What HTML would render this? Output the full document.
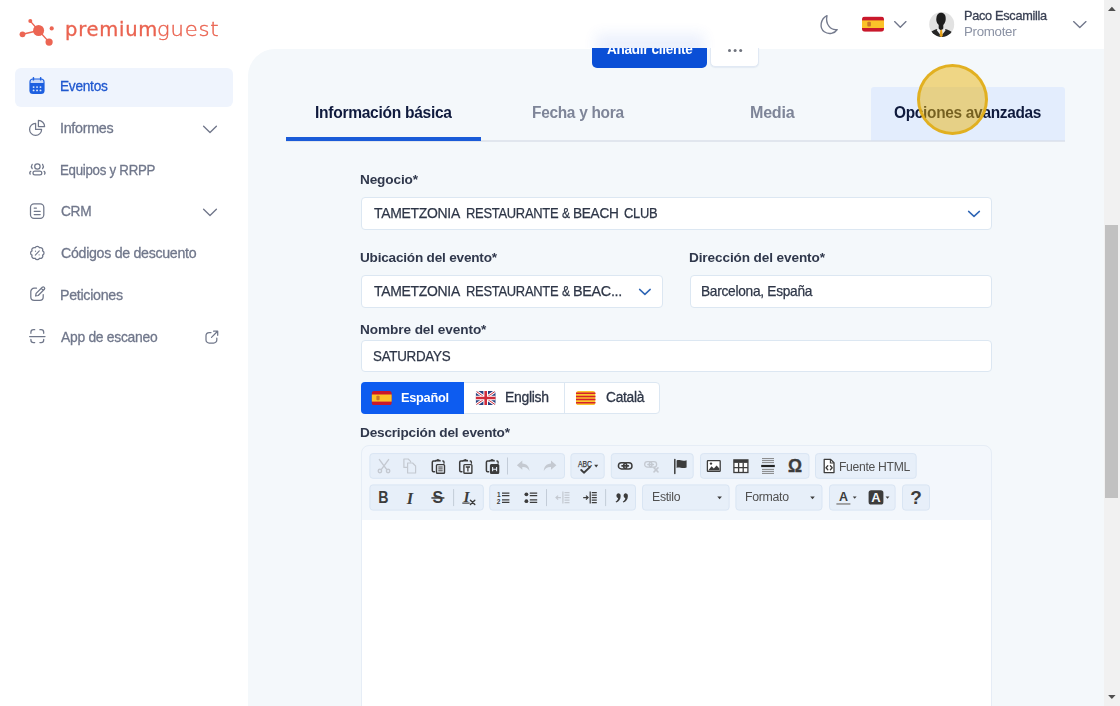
<!DOCTYPE html>
<html lang="es"><head><meta charset="utf-8"><title>PremiumGuest</title>
<style>
*{box-sizing:border-box;margin:0;padding:0}
html,body{width:1120px;height:706px;overflow:hidden;background:#fff;font-family:"Liberation Sans",sans-serif;color:#1b2a4a}
#app{position:relative;width:1120px;height:706px;overflow:hidden}
.a{position:absolute}
.t{position:absolute;white-space:nowrap;line-height:20px;transform-origin:0 50%}
svg{position:absolute;overflow:visible}
#panel{left:248px;top:48.6px;width:856px;height:700px;background:#f4f8fb;border-top-left-radius:27px}
#sb{left:1104px;top:0;width:16px;height:706px;background:#f1f1f1}
#sb .th{position:absolute;left:1.2px;width:12.8px;top:225px;height:273px;background:#c1c1c1}
.inp{position:absolute;background:#fff;border:1px solid #dce7f2;border-radius:4px}
.tg{position:absolute;background:#e8f0fa;border:1px solid #dbe6f3;border-radius:3px;height:26px}

</style></head><body><div id="app">
<div id="panel" class="a"></div>
<!-- action buttons (partly hidden by header) -->
<div class="a" style="left:592px;top:30px;width:115px;height:37.6px;background:#0a4fd6;border-radius:5px"></div>
<span class="t" style="left:607.00px;top:39.00px;font-size:14px;font-weight:bold;color:#ffffff;letter-spacing:-0.300px;transform:scaleX(0.9674);">Añadir cliente</span>
<div class="a" style="left:709.8px;top:30px;width:48.8px;height:37px;background:#fff;border:1px solid #e1e9f4;border-radius:5px;box-shadow:0 1px 1px rgba(180,195,220,.25)"></div>
<div class="a" style="left:727.5px;top:49.1px;width:3.4px;height:3.4px;border-radius:50%;background:#6f737d;box-shadow:5.6px 0 0 #6f737d,11.2px 0 0 #6f737d"></div>
<!-- header -->
<div class="a" style="left:0;top:0;width:1104px;height:48.2px;background:#fff"></div>
<div class="a" style="left:596px;top:34px;width:108px;height:22px;background:#2a5fe0;opacity:.09;filter:blur(7px);clip-path:inset(-20px -20px 7.800px -20px)"></div>
<!-- sidebar -->
<div class="a" style="left:15px;top:68px;width:218px;height:39px;border-radius:6px;background:#eff4fd"></div>
<!-- tabs -->
<div class="a" style="left:286px;top:140px;width:779px;height:1.5px;background:#e1e6ee"></div>
<div class="a" style="left:871px;top:87px;width:194px;height:54px;background:#e3edfd;border-radius:3px 3px 0 0;border-bottom:1.5px solid #dbe3f0"></div>
<div class="a" style="left:286px;top:137px;width:195px;height:4px;background:#1a5bd8"></div>
<!-- form -->
<div class="inp" style="left:361px;top:197px;width:631px;height:33px"></div>
<div class="inp" style="left:361px;top:275px;width:302px;height:33px"></div>
<div class="inp" style="left:689.5px;top:275px;width:302.5px;height:33px"></div>
<div class="inp" style="left:361px;top:340px;width:631px;height:32px"></div>
<!-- language switch -->
<div class="inp" style="left:361px;top:381.6px;width:299.300px;height:32.400px"></div>
<div class="a" style="left:361px;top:381.6px;width:103px;height:32.400px;background:#0d5cf0;border-radius:4px 0 0 4px"></div>
<div class="a" style="left:563.5px;top:382px;width:1px;height:31.500px;background:#dce7f2"></div>
<!-- editor -->
<div class="a" style="left:361px;top:444.5px;width:631px;height:300px;background:#f3f7fc;border:1px solid #e6edf6;border-radius:8px"></div>
<div class="a" style="left:362px;top:519.5px;width:629px;height:200px;background:#fff"></div>

<!-- logo icon -->
<svg width="1120" height="706" viewBox="0 0 1120 706" style="left:0;top:0;pointer-events:none">
<g fill="#ec6553" stroke="#ec6553" stroke-width="1.4" stroke-linecap="round">
<path d="M38.600,30.500 L30.300,21.100 M38.600,30.500 L22.500,34.300 M38.600,30.500 L49.100,42.100" fill="none"/>
<circle cx="38.600" cy="30.500" r="5.500" stroke="none"/><circle cx="30.300" cy="21.100" r="2" stroke="none"/><circle cx="22.500" cy="34.300" r="2.900" stroke="none"/><circle cx="49.100" cy="42.100" r="3.600" stroke="none"/><circle cx="51.700" cy="28.400" r="2.100" stroke="none"/>
</g>
<!-- calendar -->
<g>
<rect x="29.4" y="78.4" width="15.2" height="15.7" rx="3.6" fill="#1d5fe0"/>
<path d="M30.6,83 V81.6 a2.2,2.2 0 0 1 2.2,-2.2 h8.4 a2.2,2.2 0 0 1 2.2,2.2 V83 Z" fill="#c9d9f8"/>
<rect x="32.7" y="77" width="1.5" height="3.6" rx=".7" fill="#1d5fe0"/><rect x="39.9" y="77" width="1.5" height="3.6" rx=".7" fill="#1d5fe0"/>
<g fill="#dfe9fc"><circle cx="33.6" cy="87.1" r=".95"/><circle cx="37.05" cy="87.1" r=".95"/><circle cx="40.5" cy="87.1" r=".95"/><circle cx="33.6" cy="90.4" r=".95"/><circle cx="37.05" cy="90.4" r=".95"/><circle cx="40.5" cy="90.4" r=".95"/></g>
</g>
<g fill="none" stroke="#70778a" stroke-width="1.25" stroke-linecap="round" stroke-linejoin="round">
<!-- pie -->
<path d="M35.6,123.4 A6,6 0 1 0 41.6,129.4 L35.6,129.4 Z"/>
<path d="M38.4,120.4 A6.2,6.2 0 0 1 44.6,126.6 L38.4,126.6 Z"/>
<!-- people -->
<circle cx="37.4" cy="166.5" r="2.7"/>
<rect x="33" y="171" width="8.8" height="3.8" rx="1.9"/>
<path d="M32.2,164.3 q-1.6,2.2 0,4.4 M42.6,164.3 q1.6,2.2 0,4.4 M30.8,171.3 q-1.7,1.2 -.6,2.9 M44,171.3 q1.7,1.2 .6,2.9"/>
<!-- crm -->
<rect x="30.5" y="203.9" width="13.3" height="14.4" rx="3.5"/>
<path d="M34.2,208.1 h2.2 M34.2,211.3 h6 M34.2,214.5 h6"/>
<!-- discount -->
<path d="M39.48,247.73A2.36,2.36 0 0 1 42.57,250.82A2.36,2.36 0 0 1 42.57,255.18A2.36,2.36 0 0 1 39.48,258.27A2.36,2.36 0 0 1 35.12,258.27A2.36,2.36 0 0 1 32.03,255.18A2.36,2.36 0 0 1 32.03,250.82A2.36,2.36 0 0 1 35.12,247.73A2.36,2.36 0 0 1 39.48,247.73Z"/>
<path d="M39.3,250.9 l-4,4.200" stroke-width="1.1"/>
<circle cx="35.500" cy="251.200" r=".6" fill="#70778a" stroke="none"/><circle cx="39.100" cy="254.800" r=".6" fill="#70778a" stroke="none"/>
<!-- edit -->
<path d="M36.5,288.2 H34.2 a3.4,3.4 0 0 0 -3.4,3.4 v5.4 a3.4,3.4 0 0 0 3.4,3.4 h5.6 a3.4,3.4 0 0 0 3.4,-3.4 V294.6"/>
<path d="M35.6,296 l.5,-2.6 6.2,-6.2 a1.5,1.5 0 0 1 2.1,2.1 l-6.2,6.2 z M41.2,288.3 l2.1,2.1"/>
<!-- scan -->
<path d="M30.9,333.3 v-1 a2.6,2.6 0 0 1 2.6,-2.6 h1.2 M39.9,329.7 h1.2 a2.6,2.6 0 0 1 2.6,2.6 v1 M43.7,339.3 v.6 a2.6,2.6 0 0 1 -2.6,2.6 h-1.2 M34.7,342.5 h-1.2 a2.6,2.6 0 0 1 -2.6,-2.6 v-.6 M29.6,336.6 H45"/>
<!-- external -->
<path d="M211,332.5 H209.2 a3.2,3.2 0 0 0 -3.2,3.2 v4.2 a3.2,3.2 0 0 0 3.2,3.2 h4.4 a3.2,3.2 0 0 0 3.2,-3.2 V338"/>
<path d="M211.5,337.4 L217.6,331.3 M213.6,331.2 h4.1 v4.1"/>
</g>
<!-- chevrons -->
<g fill="none" stroke="#70768a" stroke-width="1.35" stroke-linecap="round" stroke-linejoin="round">
<path d="M203.6,126.3 l6.4,6.2 6.4,-6.2"/>
<path d="M203.6,209.3 l6.4,6.2 6.4,-6.2"/>
<path d="M894.6,21.6 l5.7,5.6 5.7,-5.6"/>
<path d="M1073.6,21.6 l6.2,6 6.2,-6"/>
<path d="M968.6,211.400 l5.400,5 5.400,-5" stroke="#2f66b5" stroke-width="1.5"/>
<path d="M639.600,289.400 l5.300,5 5.300,-5" stroke="#2f66b5" stroke-width="1.5"/>
</g>
<!-- moon -->
<path d="M827,15.600 C820.500,18.800 819,28 824.300,31.800 C828.600,34.800 834.800,33.600 837.200,29.600 C830.500,30.600 825.200,24.200 827,15.600 Z" fill="none" stroke="#747a8d" stroke-width="1.350" stroke-linejoin="round"/>
<!-- ES flag header -->
<g>
<clipPath id="fc1"><rect x="862" y="16.6" width="22" height="15.2" rx="3"/></clipPath>
<g clip-path="url(#fc1)"><rect x="862" y="16.6" width="22" height="15.2" fill="#c9182b"/><rect x="862" y="20.4" width="22" height="7.6" fill="#fbc229"/><rect x="867.3" y="21.7" width="3.6" height="4.8" rx="1" fill="#c9772a"/></g>
</g>
<!-- avatar -->
<g>
<clipPath id="av"><circle cx="941.7" cy="24.4" r="12.5"/></clipPath>
<circle cx="941.7" cy="24.4" r="12.5" fill="#e2e2e2"/>
<g clip-path="url(#av)">
<path d="M929,38 c0,-5.500 2.500,-7.300 8.300,-9 l3.900,1 3.900,-1 c5.800,1.700 8.800,3.500 8.800,9z" fill="#262626"/>
<path d="M937.600,28.600 l3.600,1.400 3.600,-1.400 .8,1.600 -4.400,5.800 -4.400,-5.800z" fill="#ededed"/>
<path d="M938.700,22 h4.600 v6.600 l-2.300,1.800 -2.300,-1.800z" fill="#1d1d1d"/>
<path d="M936.300,19.500 c0,-4.500 1.800,-6.800 4.700,-6.800 c3.200,0 4.900,2.300 4.700,6.600 c-.2,3.600 -2,6.200 -4.700,6.200 c-2.700,0 -4.700,-2.600 -4.700,-6z" fill="#1d1d1d"/>
<path d="M940.300,30.200 l.9,-.7 .9,.7 .6,5.300 -1.500,2.300 -1.500,-2.300z" fill="#e6a21a"/>
</g>
</g>
<!-- language flags -->
<g>
<clipPath id="fl1"><rect x="371.6" y="391" width="20.2" height="14.1" rx="2.6"/></clipPath>
<g clip-path="url(#fl1)"><rect x="371.6" y="391" width="20.2" height="14.1" fill="#c9182b"/><rect x="371.6" y="394.5" width="20.2" height="7.1" fill="#fbc229"/><rect x="376.4" y="395.7" width="3.2" height="4.5" rx=".9" fill="#c9772a"/></g>
<clipPath id="fl2"><rect x="475.7" y="391" width="20" height="14" rx="2.6"/></clipPath>
<g clip-path="url(#fl2)"><rect x="475.7" y="391" width="20" height="14" fill="#27407f"/>
<path d="M475.7,391 L495.7,405 M495.7,391 L475.7,405" stroke="#fff" stroke-width="3"/>
<path d="M475.7,391 L495.7,405 M495.7,391 L475.700,405" stroke="#cf2b3a" stroke-width="1"/>
<path d="M485.7,391 V405 M475.7,398 H495.7" stroke="#fff" stroke-width="4.6"/>
<path d="M485.7,391 V405 M475.7,398 H495.7" stroke="#cf2b3a" stroke-width="2.6"/></g>
<clipPath id="fl3"><rect x="575.9" y="391" width="19.6" height="14" rx="2.6"/></clipPath>
<g clip-path="url(#fl3)"><rect x="575.9" y="391" width="19.6" height="14" fill="#fbc62c"/>
<path d="M575.9,393.33 h20 M575.9,396.44 h20 M575.9,399.56 h20 M575.9,402.67 h20" stroke="#d5202c" stroke-width="1.56"/></g>
</g>
</svg>
<svg width="1120" height="706" viewBox="0 0 1120 706" style="left:0;top:0;pointer-events:none">
<rect x="369.90" y="453.60" width="194.60" height="24.70" rx="3" fill="#e7eff9" stroke="#d9e5f3" stroke-width="1"/>
<rect x="570.90" y="453.60" width="33.30" height="24.70" rx="3" fill="#e7eff9" stroke="#d9e5f3" stroke-width="1"/>
<rect x="611.30" y="453.60" width="81.90" height="24.70" rx="3" fill="#e7eff9" stroke="#d9e5f3" stroke-width="1"/>
<rect x="700.50" y="453.60" width="108.50" height="24.70" rx="3" fill="#e7eff9" stroke="#d9e5f3" stroke-width="1"/>
<rect x="815.50" y="453.60" width="100.70" height="24.70" rx="3" fill="#e7eff9" stroke="#d9e5f3" stroke-width="1"/>
<rect x="369.90" y="484.90" width="113.40" height="25.20" rx="3" fill="#e7eff9" stroke="#d9e5f3" stroke-width="1"/>
<rect x="489.70" y="484.90" width="145.80" height="25.20" rx="3" fill="#e7eff9" stroke="#d9e5f3" stroke-width="1"/>
<rect x="642.50" y="484.90" width="86.60" height="25.20" rx="3" fill="#e7eff9" stroke="#d9e5f3" stroke-width="1"/>
<rect x="735.90" y="484.90" width="86.10" height="25.20" rx="3" fill="#e7eff9" stroke="#d9e5f3" stroke-width="1"/>
<rect x="829.50" y="484.90" width="65.60" height="25.20" rx="3" fill="#e7eff9" stroke="#d9e5f3" stroke-width="1"/>
<rect x="902.50" y="484.90" width="27.00" height="25.20" rx="3" fill="#e7eff9" stroke="#d9e5f3" stroke-width="1"/>
<rect x="507.00" y="457.50" width="1" height="17" fill="#c3ccd8"/>
<rect x="453.10" y="489.10" width="1" height="17" fill="#c3ccd8"/>
<rect x="546.00" y="489.10" width="1" height="17" fill="#c3ccd8"/>
<rect x="605.10" y="489.10" width="1" height="17" fill="#c3ccd8"/>
<g transform="translate(376.00,458.00)" ><g fill="none" stroke="#c4c9d1" stroke-width="1.4" stroke-linecap="round"><path d="M3.4,1.6 L10.6,11.4 M12.6,1.6 L5.4,11.4"/><circle cx="3.9" cy="13" r="1.7"/><circle cx="12.1" cy="13" r="1.7"/></g></g>
<g transform="translate(402.00,458.00)" ><g fill="none" stroke="#c4c9d1" stroke-width="1.2" stroke-linejoin="round"><path d="M5.2,9.4 H1.9 V1 H6.2 L8.6,3.4 V4.6"/><path d="M5.6,5 H10.6 L13.6,8 V15 H5.6 Z"/></g></g>
<g transform="translate(429.90,458.00)" ><path d="M5.4,3 H3.6 a1.2,1.2 0 0 0 -1.2,1.2 V12.6 a1.2,1.2 0 0 0 1.2,1.2 H4.6" fill="none" stroke="#3c3c3c" stroke-width="1.5" stroke-linecap="round"/><path d="M5.2,3.6 V2.6 a.8,.8 0 0 1 .8,-.8 h.7 a1.4,1.4 0 0 1 2.6,0 h.7 a.8,.8 0 0 1 .8,.8 V3.6 Z" fill="#3c3c3c"/><path d="M12.9,3 h.2 a1,1 0 0 1 1,1 V5.2" fill="none" stroke="#3c3c3c" stroke-width="1.3" stroke-linecap="round"/><rect x="6.6" y="6.6" width="8" height="8.6" rx=".8" fill="#eef3fa" stroke="#3c3c3c" stroke-width="1.4"/><path d="M8.4,9 h4.4 M8.4,10.9 h4.4 M8.4,12.8 h4.4" stroke="#3c3c3c" stroke-width="1"/></g>
<g transform="translate(457.30,458.00)" ><path d="M5.4,3 H3.6 a1.2,1.2 0 0 0 -1.2,1.2 V12.6 a1.2,1.2 0 0 0 1.2,1.2 H4.6" fill="none" stroke="#3c3c3c" stroke-width="1.5" stroke-linecap="round"/><path d="M5.2,3.6 V2.6 a.8,.8 0 0 1 .8,-.8 h.7 a1.4,1.4 0 0 1 2.6,0 h.7 a.8,.8 0 0 1 .8,.8 V3.6 Z" fill="#3c3c3c"/><path d="M12.9,3 h.2 a1,1 0 0 1 1,1 V5.2" fill="none" stroke="#3c3c3c" stroke-width="1.3" stroke-linecap="round"/><rect x="6.6" y="6.6" width="8" height="8.6" rx=".8" fill="#eef3fa" stroke="#3c3c3c" stroke-width="1.4"/><path d="M8.5,9 h4.2 M10.6,9 v4.4" stroke="#3c3c3c" stroke-width="1.3" fill="none"/></g>
<g transform="translate(484.00,458.00)" ><path d="M5.4,3 H3.6 a1.2,1.2 0 0 0 -1.2,1.2 V12.6 a1.2,1.2 0 0 0 1.2,1.2 H4.6" fill="none" stroke="#3c3c3c" stroke-width="1.5" stroke-linecap="round"/><path d="M5.2,3.6 V2.6 a.8,.8 0 0 1 .8,-.8 h.7 a1.4,1.4 0 0 1 2.6,0 h.7 a.8,.8 0 0 1 .8,.8 V3.6 Z" fill="#3c3c3c"/><path d="M12.9,3 h.2 a1,1 0 0 1 1,1 V5.2" fill="none" stroke="#3c3c3c" stroke-width="1.3" stroke-linecap="round"/><rect x="6.6" y="6.6" width="8" height="8.6" rx=".8" fill="#3c3c3c" stroke="#3c3c3c" stroke-width="1.4"/><path d="M8.6,9 v4.2 M12.6,9 v4.2 M8.6,11.2 h4" stroke="#e7eff9" stroke-width="1.1" fill="none"/></g>
<g transform="translate(515.30,458.00)" ><path d="M7,2.6 L1.6,7.2 L7,11.8 V8.9 C10.6,8.7 12.6,10.2 14.2,13 C14,8.6 11.6,5.6 7,5.4 Z" fill="#c4c9d1"/></g>
<g transform="translate(542.00,458.00)" ><path d="M9,2.6 L14.4,7.2 L9,11.800 V8.9 C5.4,8.7 3.4,10.2 1.8,13 C2,8.600 4.4,5.600 9,5.400 Z" fill="#c4c9d1"/></g>
<g transform="translate(577.00,458.00)" ><text x="8" y="9.200" font-family="Liberation Sans,sans-serif" font-size="8.400" font-weight="normal" text-anchor="middle" fill="#3c3c3c" textLength="14" lengthAdjust="spacingAndGlyphs" stroke="#3c3c3c" stroke-width=".25">ABC</text><path d="M4.200,12 l2.700,2.700 6,-5.600" fill="none" stroke="#3c3c3c" stroke-width="1.900" stroke-linecap="round" stroke-linejoin="round"/></g>
<path d="M594.200,464.800 h4 l-2,2.600z" fill="#3c3c3c"/>
<g transform="translate(617.20,458.00)" ><g fill="none" stroke="#3c3c3c" stroke-width="1.45"><rect x="1.2" y="4.800" width="8.400" height="6.200" rx="3.100"/><rect x="6.400" y="4.800" width="8.400" height="6.200" rx="3.100"/></g><path d="M4.800,7.900 h6.400" stroke="#3c3c3c" stroke-width="1.600" stroke-linecap="round"/></g>
<g transform="translate(643.60,457.50)" ><g transform="scale(.88) translate(0,0)"><g fill="none" stroke="#c4c9d1" stroke-width="1.45"><rect x="1.2" y="4.800" width="8.400" height="6.200" rx="3.100"/><rect x="6.400" y="4.800" width="8.400" height="6.200" rx="3.100"/></g><path d="M4.800,7.900 h6.400" stroke="#c4c9d1" stroke-width="1.600" stroke-linecap="round"/></g><path d="M10.4,10.4 l4,4 M14.4,10.4 l-4,4" stroke="#c4c9d1" stroke-width="1.5" stroke-linecap="round"/></g>
<g transform="translate(672.20,458.00)" ><path d="M2.6,1.4 v14" stroke="#3c3c3c" stroke-width="1.5" stroke-linecap="round"/><path d="M4.4,2.6 C7,1 9.4,3.800 14.4,2.200 V9.600 C9.400,11.200 7,8.400 4.400,10 Z" fill="#3c3c3c"/></g>
<g transform="translate(705.80,458.00)" ><rect x="1.6" y="2.6" width="12.8" height="10.8" rx=".6" fill="#fff" stroke="#3c3c3c" stroke-width="1.3"/><path d="M2.400,12.600 L5.800,8.200 L8,10.400 L10.800,7.400 L13.600,10.600 V12.600 Z" fill="#3c3c3c"/><circle cx="5.2" cy="5.600" r="1.200" fill="#3c3c3c"/></g>
<g transform="translate(732.90,458.00)" ><rect x="1" y="1.900" width="14" height="12.600" fill="#fff" stroke="#3c3c3c" stroke-width="1.300"/><rect x="1" y="1.900" width="14" height="3" fill="#3c3c3c"/><path d="M5.700,4.800 V14.500 M10.300,4.800 V14.500 M1,9.700 H15" stroke="#3c3c3c" stroke-width="1.300"/></g>
<g transform="translate(760.00,458.00)" ><path d="M2,.6 h12 M2,2.600 h12 M2,4.600 h12 M2,11.400 h12 M2,13.400 h12 M2,15.400 h12" stroke="#777" stroke-width=".9"/><path d="M1.200,8 h13.600" stroke="#222" stroke-width="2.200"/></g>
<g transform="translate(787.00,458.00)" ><text x="8" y="14" font-family="Liberation Sans,sans-serif" font-size="17.5" font-weight="bold" text-anchor="middle" fill="#3c3c3c" stroke="#3c3c3c" stroke-width=".4">Ω</text></g>
<g transform="translate(821.00,458.00)" ><path d="M3.200,1.400 H9.600 L13,4.800 V14.600 H3.200 Z" fill="#fff" stroke="#3c3c3c" stroke-width="1.300" stroke-linejoin="round"/><path d="M9.400,1.600 V5 H12.800" fill="none" stroke="#3c3c3c" stroke-width="1.100"/><path d="M6.800,7.800 L5,9.800 L6.800,11.800 M9.400,7.800 L11.200,9.800 L9.400,11.800" fill="none" stroke="#3c3c3c" stroke-width="1.300" stroke-linecap="round" stroke-linejoin="round"/></g>
<text x="383.50" y="503.50" font-family="Liberation Sans,sans-serif" font-size="16.5" font-weight="bold"  text-anchor="middle" fill="#3c3c3c"  transform="translate(53.690,0) scale(0.86,1)">B</text>
<text x="410.00" y="503.50" font-family="Liberation Serif,serif" font-size="16.5" font-weight="bold" font-style="italic" text-anchor="middle" fill="#3c3c3c" >I</text>
<text x="437.90" y="503.30" font-family="Liberation Sans,sans-serif" font-size="16" font-weight="bold"  text-anchor="middle" fill="#3c3c3c" >S</text>
<rect x="431.400" y="497.20" width="13" height="1.500" fill="#3c3c3c"/>
<text x="466.50" y="502.00" font-family="Liberation Serif,serif" font-size="15.5" font-weight="bold" font-style="italic" text-anchor="middle" fill="#3c3c3c" >I</text>
<rect x="462.300" y="502.50" width="7.400" height="1.200" fill="#3c3c3c"/>
<path d="M470.400,500.20 l4.400,4.400 m0,-4.400 l-4.400,4.400" stroke="#3c3c3c" stroke-width="1.400" stroke-linecap="round"/>
<g transform="translate(495.60,489.60)" ><path d="M6.400,3.500 h7.400 M6.400,6 h7.400 M6.400,10.300 h7.400 M6.400,12.800 h7.400" stroke="#3c3c3c" stroke-width="1.250"/><text x="1.400" y="7" font-family="Liberation Sans,sans-serif" font-size="6.500" font-weight="bold" fill="#3c3c3c">1</text><text x="1.200" y="14.600" font-family="Liberation Sans,sans-serif" font-size="6.500" font-weight="bold" fill="#3c3c3c">2</text></g>
<g transform="translate(523.40,489.60)" ><path d="M6.400,3.500 h7.400 M6.400,6 h7.400 M6.400,10.300 h7.400 M6.400,12.800 h7.400" stroke="#3c3c3c" stroke-width="1.250"/><circle cx="3" cy="4.700" r="1.900" fill="#3c3c3c"/><circle cx="3" cy="11.600" r="1.900" fill="#3c3c3c"/></g>
<g transform="translate(554.70,489.60)" ><path d="M8.200,2 V14" stroke="#c4c9d1" stroke-width="1.200"/><path d="M9.800,3 h5 M9.800,5.500 h5 M9.800,8 h5 M9.800,10.500 h5 M9.800,13 h5" stroke="#c4c9d1" stroke-width="1.100"/><path d="M6.200,8 H1.400 M3.400,6 L1.300,8 L3.400,10" fill="none" stroke="#c4c9d1" stroke-width="1.200"/></g>
<g transform="translate(582.00,489.60)" ><path d="M8.200,2 V14" stroke="#3c3c3c" stroke-width="1.200"/><path d="M9.800,3 h5 M9.800,5.500 h5 M9.800,8 h5 M9.800,10.500 h5 M9.800,13 h5" stroke="#3c3c3c" stroke-width="1.100"/><path d="M1.200,8 H6 M4,6 L6.100,8 L4,10" fill="none" stroke="#3c3c3c" stroke-width="1.200"/></g>
<g transform="translate(613.70,489.60)" ><path d="M4.3,3.600 a2.700,2.700 0 0 1 2.700,2.700 c0,3.600 -2,5.800 -4.600,6.600 l-.5,-1 c1.500,-.8 2.300,-1.900 2.500,-3.300 a2.700,2.700 0 0 1 -.1,-5 z M11.5,3.600 a2.700,2.700 0 0 1 2.700,2.700 c0,3.600 -2,5.800 -4.600,6.600 l-.5,-1 c1.500,-.8 2.300,-1.900 2.500,-3.300 a2.700,2.700 0 0 1 -.1,-5 z" fill="#3c3c3c"/></g>
<path d="M717.300,496.600 h4.600 l-2.300,2.600z" fill="#3c3c3c"/><path d="M810.200,496.600 h4.600 l-2.300,2.600z" fill="#3c3c3c"/>
<text x="843.40" y="501.40" font-family="Liberation Sans,sans-serif" font-size="12.5" font-weight="bold"  text-anchor="middle" fill="#3c3c3c" >A</text>
<rect x="836.400" y="503.20" width="14" height="1.500" fill="#8b8b8b"/>
<path d="M852.800,496.600 h3.800 l-1.900,2.200z" fill="#3c3c3c"/>
<rect x="868.600" y="490.20" width="14.800" height="14.400" rx="2.600" fill="#3c3c3c"/>
<text x="876" y="502.20" font-family="Liberation Sans,sans-serif" font-size="13" font-weight="bold" text-anchor="middle" fill="#f2f6fb">A</text>
<path d="M885.600,496.600 h3.800 l-1.900,2.200z" fill="#3c3c3c"/>
<text x="916.00" y="504.40" font-family="Liberation Sans,sans-serif" font-size="19" font-weight="bold"  text-anchor="middle" fill="#3c3c3c" >?</text>
</svg>

<span class="t" style="left:64.99px;top:20.00px;font-size:18.6px;font-weight:normal;color:#ea6350;letter-spacing:0.700px;transform:scaleX(1.0501);font-family:'DejaVu Sans','Liberation Sans',sans-serif;-webkit-text-stroke:0.3px #ea6350;">premium</span>
<span class="t" style="left:156.61px;top:20.00px;font-size:18.6px;font-weight:200;color:#ea6350;letter-spacing:0.700px;transform:scaleX(1.1377);font-family:'DejaVu Sans','Liberation Sans',sans-serif;-webkit-text-stroke:0.35px #ea6350;">guest</span>
<span class="t" style="left:964.00px;top:6.00px;font-size:13px;font-weight:normal;color:#3a4154;letter-spacing:-0.300px;transform:scaleX(0.9792);-webkit-text-stroke:0.3px #3a4154;">Paco Escamilla</span>
<span class="t" style="left:963.99px;top:22.00px;font-size:13px;font-weight:normal;color:#8b92a4;letter-spacing:-0.296px;transform:scaleX(1.0241);">Promoter</span>
<span class="t" style="left:59.62px;top:76.00px;font-size:14.5px;font-weight:normal;color:#1f57cf;letter-spacing:-0.300px;transform:scaleX(0.9451);-webkit-text-stroke:0.3px currentColor;">Eventos</span>
<span class="t" style="left:59.59px;top:118.00px;font-size:14.5px;font-weight:normal;color:#70778b;letter-spacing:-0.300px;transform:scaleX(0.9874);-webkit-text-stroke:0.3px currentColor;">Informes</span>
<span class="t" style="left:59.60px;top:160.00px;font-size:14.5px;font-weight:normal;color:#70778b;letter-spacing:-0.300px;transform:scaleX(0.9166);-webkit-text-stroke:0.3px currentColor;">Equipos y RRPP</span>
<span class="t" style="left:60.60px;top:201.00px;font-size:14.5px;font-weight:normal;color:#70778b;letter-spacing:-0.300px;transform:scaleX(0.9439);-webkit-text-stroke:0.3px currentColor;">CRM</span>
<span class="t" style="left:60.60px;top:243.00px;font-size:14.5px;font-weight:normal;color:#70778b;letter-spacing:-0.300px;transform:scaleX(0.9783);-webkit-text-stroke:0.3px currentColor;">Códigos de descuento</span>
<span class="t" style="left:59.60px;top:285.00px;font-size:14.5px;font-weight:normal;color:#70778b;letter-spacing:-0.300px;transform:scaleX(0.9815);-webkit-text-stroke:0.3px currentColor;">Peticiones</span>
<span class="t" style="left:60.60px;top:327.00px;font-size:14.5px;font-weight:normal;color:#70778b;letter-spacing:-0.300px;transform:scaleX(0.9573);-webkit-text-stroke:0.3px currentColor;">App de escaneo</span>
<span class="t" style="left:314.50px;top:103.00px;font-size:16px;font-weight:bold;color:#0f1a3d;letter-spacing:-0.300px;transform:scaleX(0.9735);">Información básica</span>
<span class="t" style="left:532.00px;top:103.00px;font-size:16px;font-weight:bold;color:#7e8598;letter-spacing:-0.300px;transform:scaleX(0.9644);">Fecha y hora</span>
<span class="t" style="left:749.81px;top:103.00px;font-size:16px;font-weight:bold;color:#7e8598;letter-spacing:-0.236px;transform:scaleX(1.0047);">Media</span>
<span class="t" style="left:894.40px;top:103.00px;font-size:16px;font-weight:bold;color:#0f1a3d;letter-spacing:-0.300px;transform:scaleX(0.9622);">Opciones avanzadas</span>
<span class="t" style="left:360.26px;top:170.00px;font-size:13.5px;font-weight:bold;color:#30384c;letter-spacing:-0.145px;transform:scaleX(1.0088);">Negocio*</span>
<span class="t" style="left:360.25px;top:248.00px;font-size:13.5px;font-weight:bold;color:#30384c;letter-spacing:-0.202px;transform:scaleX(1.0056);">Ubicación del evento*</span>
<span class="t" style="left:689.30px;top:248.00px;font-size:13.5px;font-weight:bold;color:#30384c;letter-spacing:-0.115px;transform:scaleX(1.0075);">Dirección del evento*</span>
<span class="t" style="left:360.25px;top:320.00px;font-size:13.5px;font-weight:bold;color:#30384c;letter-spacing:-0.084px;transform:scaleX(1.0085);">Nombre del evento*</span>
<span class="t" style="left:360.24px;top:423.00px;font-size:13.5px;font-weight:bold;color:#30384c;letter-spacing:-0.196px;transform:scaleX(1.0085);">Descripción del evento*</span>
<span class="t" style="left:374.30px;top:203.00px;font-size:14.5px;font-weight:normal;color:#2e3647;letter-spacing:-0.300px;transform:scaleX(0.9613);-webkit-text-stroke:0.25px currentColor;">TAMETZONIA</span>
<span class="t" style="left:465.70px;top:203.00px;font-size:14.5px;font-weight:normal;color:#2e3647;letter-spacing:-0.300px;transform:scaleX(0.8915);-webkit-text-stroke:0.25px currentColor;">RESTAURANTE</span>
<span class="t" style="left:562.10px;top:203.00px;font-size:14.5px;font-weight:normal;color:#2e3647;letter-spacing:0.000px;transform:scaleX(0.8304);-webkit-text-stroke:0.25px currentColor;">&amp;</span>
<span class="t" style="left:572.90px;top:203.00px;font-size:14.5px;font-weight:normal;color:#2e3647;letter-spacing:-0.300px;transform:scaleX(0.9401);-webkit-text-stroke:0.25px currentColor;">BEACH</span>
<span class="t" style="left:623.50px;top:203.00px;font-size:14.5px;font-weight:normal;color:#2e3647;letter-spacing:-0.300px;transform:scaleX(0.8895);-webkit-text-stroke:0.25px currentColor;">CLUB</span>
<span class="t" style="left:374.30px;top:281.00px;font-size:14.5px;font-weight:normal;color:#2e3647;letter-spacing:-0.300px;transform:scaleX(0.9613);-webkit-text-stroke:0.25px currentColor;">TAMETZONIA</span>
<span class="t" style="left:465.70px;top:281.00px;font-size:14.5px;font-weight:normal;color:#2e3647;letter-spacing:-0.300px;transform:scaleX(0.8915);-webkit-text-stroke:0.25px currentColor;">RESTAURANTE</span>
<span class="t" style="left:562.10px;top:281.00px;font-size:14.5px;font-weight:normal;color:#2e3647;letter-spacing:0.000px;transform:scaleX(0.8304);-webkit-text-stroke:0.25px currentColor;">&amp;</span>
<span class="t" style="left:572.89px;top:281.00px;font-size:14.5px;font-weight:normal;color:#2e3647;letter-spacing:-0.300px;transform:scaleX(0.9896);-webkit-text-stroke:0.25px currentColor;">BEAC...</span>
<span class="t" style="left:701.19px;top:281.00px;font-size:14.5px;font-weight:normal;color:#2e3647;letter-spacing:-0.300px;transform:scaleX(0.9463);-webkit-text-stroke:0.25px currentColor;">Barcelona, España</span>
<span class="t" style="left:372.50px;top:346.00px;font-size:14.5px;font-weight:normal;color:#2e3647;letter-spacing:-0.300px;transform:scaleX(0.9230);-webkit-text-stroke:0.25px currentColor;">SATURDAYS</span>
<span class="t" style="left:401.40px;top:388.00px;font-size:13.6px;font-weight:bold;color:#ffffff;letter-spacing:-0.300px;transform:scaleX(0.9411);">Español</span>
<span class="t" style="left:505.26px;top:387.00px;font-size:14px;font-weight:normal;color:#2e3647;letter-spacing:-0.300px;transform:scaleX(0.9980);-webkit-text-stroke:0.3px currentColor;">English</span>
<span class="t" style="left:605.60px;top:387.00px;font-size:14px;font-weight:normal;color:#2e3647;letter-spacing:-0.274px;transform:scaleX(0.9825);-webkit-text-stroke:0.3px currentColor;">Català</span>
<span class="t" style="left:839.39px;top:457.00px;font-size:12px;font-weight:normal;color:#505050;letter-spacing:-0.300px;transform:scaleX(1.0123);">Fuente HTML</span>
<span class="t" style="left:651.61px;top:487.00px;font-size:12px;font-weight:normal;color:#505050;letter-spacing:-0.300px;transform:scaleX(1.0224);">Estilo</span>
<span class="t" style="left:744.89px;top:487.00px;font-size:12px;font-weight:normal;color:#505050;letter-spacing:-0.300px;transform:scaleX(1.0274);">Formato</span>
<!-- click highlight -->
<div class="a" style="left:916.5px;top:63.5px;width:71.5px;height:71.5px;border-radius:50%;background:rgba(234,176,0,0.47);border:3px solid rgba(224,172,24,0.92)"></div>
<div id="sb" class="a"><div class="th"></div><svg width="16" height="706" style="left:0;top:0"><path d="M4,10.9 L7.900,6.800 L11.800,10.900Z M4.100,694.900 L11.600,694.900 L7.850,699Z" fill="#505050"/></svg></div>

</div></body></html>
